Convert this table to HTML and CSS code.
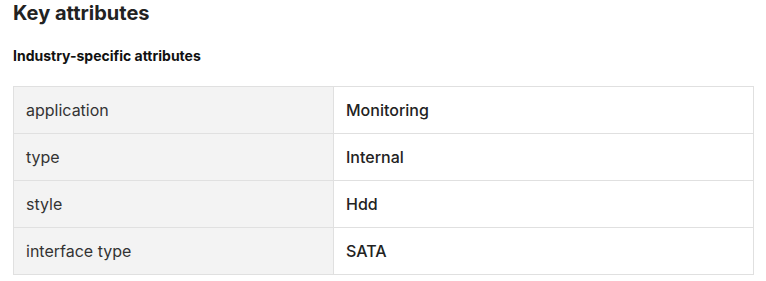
FILE: index.html
```html
<!DOCTYPE html>
<html>
<head>
<meta charset="utf-8">
<link rel="stylesheet" href="styles.css">
</head>
<body>
<section class="attrs">
  <h2 class="title">Key attributes</h2>
  <h3 class="subtitle">Industry-specific attributes</h3>
  <table class="attr-table">
    <tr><td class="k">application</td><td class="v">Monitoring</td></tr>
    <tr><td class="k">type</td><td class="v">Internal</td></tr>
    <tr><td class="k">style</td><td class="v">Hdd</td></tr>
    <tr><td class="k">interface type</td><td class="v">SATA</td></tr>
  </table>
</section>
</body>
</html>
```
FILE: styles.css
```css
body {
  margin: 0;
  background: #fff;
  font-family: Inter, "Liberation Sans", sans-serif;
  color: #222;
}
.attrs {
  padding: 0 13px;
}
.title {
  margin: 0;
  padding-top: 1px;
  font-size: 20px;
  line-height: 24px;
  font-weight: 700;
  color: #222;
}
.subtitle {
  margin: 22px 0 0;
  font-size: 14px;
  line-height: 18px;
  font-weight: 700;
  color: #111;
}
.attr-table {
  margin-top: 21px;
  width: 741px;
  border-collapse: collapse;
}
.attr-table td {
  border: 1px solid #e0e0e0;
  height: 47px;
  padding: 0 12px;
  font-size: 16px;
  box-sizing: border-box;
  vertical-align: middle;
}
.attr-table .k {
  width: 320px;
  background: #f3f3f3;
  color: #333;
  font-weight: 400;
}
.attr-table .v {
  color: #222;
  font-weight: 500;
}
```
